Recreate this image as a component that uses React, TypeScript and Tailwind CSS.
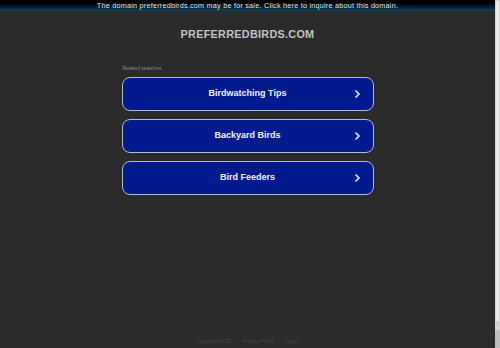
const searches = ["Birdwatching Tips", "Backyard Birds", "Bird Feeders"];

function Chevron() {
  return (
    <svg className="w-[7px] h-[9px]" viewBox="0 0 7 9" fill="none" stroke="currentColor" strokeWidth="1.6">
      <path d="M1.5 1l3.5 3.5L1.5 8" />
    </svg>
  );
}

export default function App() {
  return (
    <div className="flex h-[348px] w-[500px] overflow-hidden bg-[#2b2b2b] font-['Liberation_Sans',Arial,sans-serif]">
      <div className="flex flex-1 flex-col">
        {/* For sale banner */}
        <div className="flex h-[11px] items-center justify-center bg-gradient-to-b from-[#000000] via-[#03121d] to-[#0e4466]">
          <p className="text-[7.2px] leading-none tracking-[0.25px] text-[#dfe8ee]">
            The domain preferredbirds.com may be for sale. Click here to inquire about this domain.
          </p>
        </div>

        {/* Domain title */}
        <h1 className="mt-[16px] text-center text-[10.8px] font-bold leading-[14px] tracking-[0.3px] text-[#c4c4c4]">
          PREFERREDBIRDS.COM
        </h1>

        {/* Related searches */}
        <div className="mx-auto mt-[24px] w-[252px]">
          <p className="pl-[1px] text-[5px] leading-[6px] text-[#8a8a8a]">Related searches</p>
          <div className="mt-[6px] flex flex-col gap-[8px]">
            {searches.map((s) => (
              <div
                key={s}
                className="relative flex h-[34px] items-center justify-center rounded-[8px] border border-[#b4bad4] bg-[#011a8d] text-white"
              >
                <span className="text-[9px] font-bold text-[#f1f3fb]">{s}</span>
                <span className="absolute right-[12px] top-1/2 -translate-y-1/2 text-[#e8ecf8]">
                  <Chevron />
                </span>
              </div>
            ))}
          </div>
        </div>

        {/* Footer */}
        <div className="mt-auto mb-[4px] flex items-center justify-center gap-[5px] text-[5px] leading-[6px] text-[#454545]">
          <span>Copyright 2025</span>
          <span>-</span>
          <span>Privacy Policy</span>
          <span>-</span>
          <span>Legal</span>
        </div>
      </div>

      {/* Scrollbar */}
      <div className="flex w-[5px] flex-col bg-[#d4d4d4]">
        <div className="mx-auto mt-[1px] h-[320px] w-[3px] rounded-full bg-[#ececec]" />
        <div className="mt-auto h-[18px] w-full bg-[#bdbdbd]" />
      </div>
    </div>
  );
}
